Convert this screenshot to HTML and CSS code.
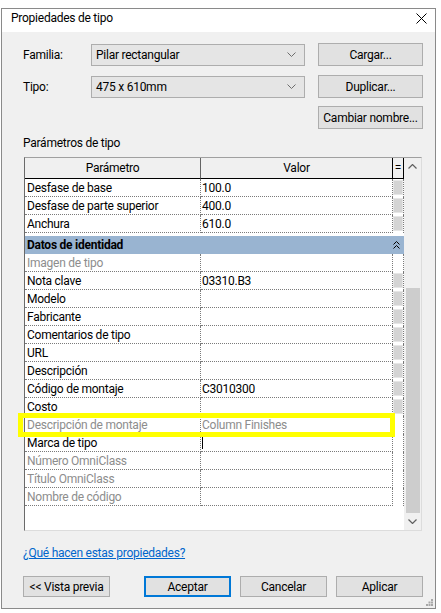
FILE: index.html
```html
<!DOCTYPE html>
<html lang="es">
<head>
<meta charset="utf-8">
<title>Propiedades de tipo</title>
<link rel="stylesheet" href="styles.css">
</head>
<body>
<div class="bg-top"></div>
<div class="window">
  <div class="titlebar">
    <span class="title">Propiedades de tipo</span>
    <svg class="close" width="11" height="11" viewBox="0 0 11 11"><path d="M0.5 0.5 L10.5 10.5 M10.5 0.5 L0.5 10.5" stroke="#000" stroke-width="1" fill="none"/></svg>
  </div>
  <div class="body">
    <div class="form-row">
      <span class="label">Familia:</span>
      <div class="select"><span>Pilar rectangular</span><svg width="9" height="5" viewBox="0 0 9 5"><path d="M0.5 0.5 L4.5 4.5 L8.5 0.5" stroke="#6d6d6d" fill="none"/></svg></div>
      <div class="btn">Cargar...</div>
    </div>
    <div class="form-row r2">
      <span class="label">Tipo:</span>
      <div class="select"><span>475 x 610mm</span><svg width="9" height="5" viewBox="0 0 9 5"><path d="M0.5 0.5 L4.5 4.5 L8.5 0.5" stroke="#6d6d6d" fill="none"/></svg></div>
      <div class="btn">Duplicar...</div>
    </div>
    <div class="form-row r3">
      <div class="btn">Cambiar nombre...</div>
    </div>
    <div class="section-label">Parámetros de tipo</div>
    <div class="grid-area">
      <div class="table">
        <div class="row head">
          <div class="c1">Parámetro</div>
          <div class="c2">Valor</div>
          <div class="c3">=</div>
        </div>
        <div class="row"><div class="c1">Desfase de base</div><div class="c2">100.0</div><div class="c3"><i class="box"></i></div></div>
        <div class="row"><div class="c1">Desfase de parte superior</div><div class="c2">400.0</div><div class="c3"><i class="box"></i></div></div>
        <div class="row"><div class="c1">Anchura</div><div class="c2">610.0</div><div class="c3"><i class="box"></i></div></div>
        <div class="band">
          <span>Datos de identidad</span>
          <svg width="7" height="8" viewBox="0 0 7 8"><path d="M0.5 3.5 L3.5 0.5 L6.5 3.5 M0.5 7.5 L3.5 4.5 L6.5 7.5" stroke="#000" fill="none"/></svg>
        </div>
        <div class="row dim"><div class="c1">Imagen de tipo</div><div class="c2"></div><div class="c3"></div></div>
        <div class="row"><div class="c1">Nota clave</div><div class="c2">03310.B3</div><div class="c3"><i class="box"></i></div></div>
        <div class="row"><div class="c1">Modelo</div><div class="c2"></div><div class="c3"><i class="box"></i></div></div>
        <div class="row"><div class="c1">Fabricante</div><div class="c2"></div><div class="c3"><i class="box"></i></div></div>
        <div class="row"><div class="c1">Comentarios de tipo</div><div class="c2"></div><div class="c3"><i class="box"></i></div></div>
        <div class="row"><div class="c1">URL</div><div class="c2"></div><div class="c3"><i class="box"></i></div></div>
        <div class="row"><div class="c1">Descripción</div><div class="c2"></div><div class="c3"><i class="box"></i></div></div>
        <div class="row"><div class="c1">Código de montaje</div><div class="c2">C3010300</div><div class="c3"><i class="box"></i></div></div>
        <div class="row"><div class="c1">Costo</div><div class="c2"></div><div class="c3"><i class="box"></i></div></div>
        <div class="row dim"><div class="c1">Descripción de montaje</div><div class="c2">Column Finishes</div><div class="c3"></div></div>
        <div class="row"><div class="c1">Marca de tipo</div><div class="c2"><span class="caret"></span></div><div class="c3"></div></div>
        <div class="row dim"><div class="c1">Número OmniClass</div><div class="c2"></div><div class="c3"></div></div>
        <div class="row dim"><div class="c1">Título OmniClass</div><div class="c2"></div><div class="c3"></div></div>
        <div class="row dim"><div class="c1">Nombre de código</div><div class="c2"></div><div class="c3"></div></div>
      </div>
      <div class="scrollbar">
        <div class="arrow"><svg width="9" height="5" viewBox="0 0 9 5"><path d="M0.5 4.5 L4.5 0.5 L8.5 4.5" stroke="#606060" stroke-width="1.2" fill="none"/></svg></div>
        <div class="track"></div>
        <div class="thumb"></div>
        <div class="arrow"><svg width="9" height="5" viewBox="0 0 9 5"><path d="M0.5 0.5 L4.5 4.5 L8.5 0.5" stroke="#606060" stroke-width="1.2" fill="none"/></svg></div>
      </div>
      <div class="highlight"></div>
    </div>
    <a class="link" href="#">¿Qué hacen estas propiedades?</a>
    <div class="buttons">
      <div class="btn b">&lt;&lt; Vista previa</div>
      <div class="btn b default">Aceptar</div>
      <div class="btn b">Cancelar</div>
      <div class="btn b">Aplicar</div>
    </div>
    <svg class="grip" width="7" height="7" viewBox="0 0 7 7"><g fill="#a8a8a8"><rect x="5" y="0" width="2" height="2"/><rect x="2.5" y="2.5" width="2" height="2"/><rect x="5" y="2.5" width="2" height="2"/><rect x="0" y="5" width="2" height="2"/><rect x="2.5" y="5" width="2" height="2"/><rect x="5" y="5" width="2" height="2"/></g></svg>
  </div>
</div>
</body>
</html>
```
FILE: styles.css
```css
* { box-sizing: border-box; }
html, body { margin: 0; padding: 0; }
body {
  width: 441px;
  height: 613px;
  overflow: hidden;
  background: #ffffff;
  font-family: Roboto, "Noto Sans", sans-serif;
  font-size: 12px;
  letter-spacing: -0.25px;
  line-height: 16px;
  color: #000;
}
.bg-top { height: 8px; background: #fff; }
.window {
  margin-left: 1px;
  width: 435px;
  height: 601px;
  border: 1px solid #8a8a8a;
  background: #f0f0f0;
  display: flex;
  flex-direction: column;
}
.titlebar {
  height: 23px;
  background: #fff;
  display: flex;
  justify-content: space-between;
  align-items: flex-start;
  padding: 1px 7px 0 9px;
}
.title { line-height: 16px; }
.close { margin-top: 3px; margin-right: 1px; }
.body {
  flex: 1;
  position: relative;
  padding: 11px 0 0 21px;
}
.form-row { display: flex; align-items: center; height: 23px; }
.form-row.r2 { margin-top: 9px; }
.form-row.r3 { margin-top: 8px; padding-left: 295px; }
.label { width: 68px; }
.select {
  width: 214px;
  height: 22px;
  background: #e5e5e5;
  border: 1px solid #adadad;
  display: flex;
  align-items: center;
  justify-content: space-between;
  padding: 0 8px 0 4px;
}
.btn {
  height: 23px;
  width: 105px;
  margin-left: 13px;
  background: #e1e1e1;
  border: 1px solid #adadad;
  display: flex;
  align-items: center;
  justify-content: center;
  white-space: nowrap;
}
.form-row.r3 .btn { margin-left: 0; }
.section-label { margin-top: 6px; }
.grid-area {
  position: relative;
  margin-top: 6px;
  margin-left: 1px;
  width: 398px;
  height: 374px;
  border-top: 1px solid #a0a0a0;
  border-left: 1px solid #6a6a6a;
  border-right: 1px solid #dcdcdc;
  border-bottom: 1px solid #dcdcdc;
  background: #fff;
  display: flex;
}
.table { width: 379px; }
.row { display: flex; height: 18px; }
.row > div { height: 18px; line-height: 18px; white-space: nowrap; }
.c1 {
  width: 176px;
  padding-left: 2px;
  border-right: 1px dotted #7a7a7a;
  border-bottom: 1px dotted #7a7a7a;
}
.c2 {
  width: 192px;
  padding-left: 1px;
  border-right: 1px dotted #7a7a7a;
  border-bottom: 1px dotted #7a7a7a;
}
.c3 {
  width: 11px;
  border-right: 1px dotted #7a7a7a;
  padding: 1px 0 0 0;
}
.box {
  display: block;
  width: 10px;
  height: 15px;
  background: #d4d4d4;
  border: 1px solid #e6e6e6;
}
.row.head { height: 21px; background: #f0f0f0; }
.row.head > div {
  height: 21px;
  line-height: 20px;
  text-align: center;
  border-bottom: 1px solid #000;
  padding: 0;
}
.row.head .c1 { border-right: 1px solid #646464; }
.row.head .c2 { border-right: 1px solid #000; }
.row.head .c3 { border-right: 1px solid #000; border-left: 1px solid #000; width: 12px; margin-left: -1px; }
.row.dim > div { color: #8d8d8d; }
.band {
  margin-top: 3px;
  height: 18px;
  background: #99b4d1;
  font-weight: bold;
  padding: 0 4px 0 2px;
  display: flex;
  align-items: center;
  justify-content: space-between;
  line-height: 17px;
}
.caret {
  display: inline-block;
  width: 1px;
  height: 12px;
  background: #000;
  vertical-align: middle;
  margin-top: -2px;
}
.scrollbar {
  width: 17px;
  background: #f0f0f0;
  display: flex;
  flex-direction: column;
}
.arrow {
  height: 17px;
  display: flex;
  align-items: center;
  justify-content: center;
}
.track { height: 113px; }
.thumb { height: 225px; margin: 0 1px 0 2px; background: #cdcdcd; }
.highlight {
  position: absolute;
  left: -7px;
  top: 255px;
  width: 377px;
  height: 24px;
  border: 5px solid #ffff00;
}
.link {
  display: inline-block;
  margin-top: 14px;
  color: #0066cc;
  text-decoration: underline;
}
.buttons { display: flex; margin-top: 15px; }
.btn.b { width: 87px; height: 21px; margin-left: 9px; }
.btn.b:first-child { margin-left: 0; }
.btn.b.default { margin-left: 34px; border: 2px solid #0078d7; }
.grip { position: absolute; right: 2px; bottom: 2px; }
```
